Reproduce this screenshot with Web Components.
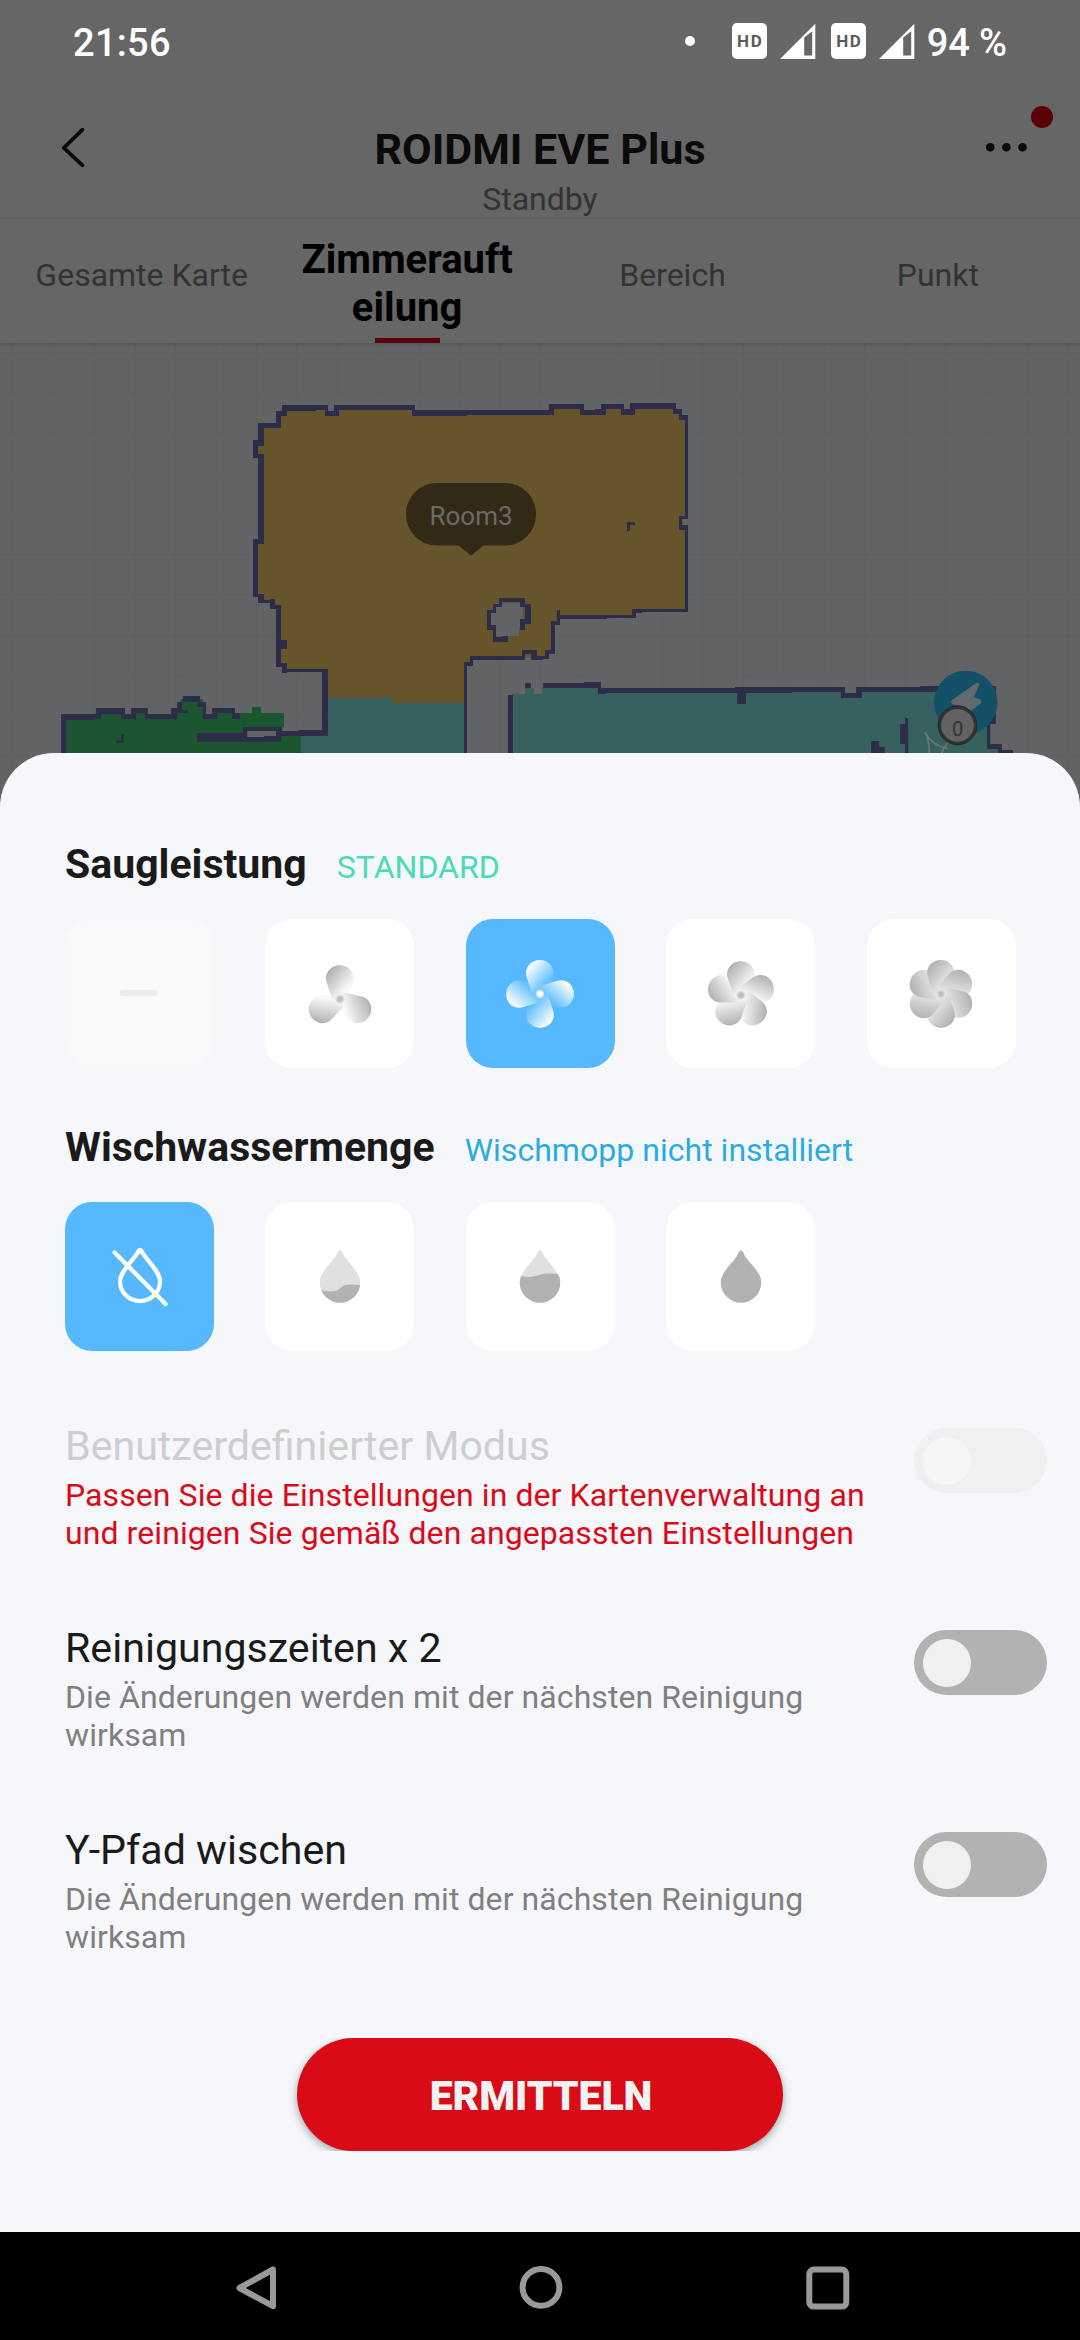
<!DOCTYPE html>
<html lang="de">
<head>
<meta charset="utf-8">
<meta name="viewport" content="width=1080">
<title>ROIDMI EVE Plus</title>
<style>
html,body{margin:0;padding:0}
body{font-family:Roboto,"Liberation Sans",sans-serif;background:#666;width:1080px;height:2340px;overflow:hidden}
</style>
</head>
<body>
<vacuum-app></vacuum-app>
<script>
const define = (name, html, extra) => {
  const tpl = document.createElement('template');
  tpl.innerHTML = html;
  customElements.define(name, class extends HTMLElement {
    connectedCallback() {
      if (this.shadowRoot) return;
      this.attachShadow({ mode: 'open' }).appendChild(tpl.content.cloneNode(true));
      if (extra) extra.call(this, this.shadowRoot);
    }
  });
};

/* ---------- system bars ---------- */
define('signal-icon', `<style>:host{display:block;width:36px;height:36px}svg{display:block}</style>
<svg width="36" height="36" viewBox="0 0 36 36"><path fill="#fff" fill-rule="evenodd" d="M35.3 .8V36H0ZM24.2 14.5V32.6H32.2V8.2Z"/></svg>`);

define('hd-badge', `<style>:host{display:flex;align-items:center;justify-content:center;width:35.6px;height:35.6px;border-radius:5px;background:#fff;color:#5c5c5c;font:700 17px/20px Roboto,sans-serif;letter-spacing:1.6px;text-indent:1.6px}</style><span>HD</span>`);

define('status-bar', `<style>
:host{display:flex;height:86px;box-sizing:border-box;padding:0 73px 0 73px;color:#fff;font:500 38px/86px Roboto,sans-serif;justify-content:space-between}
.r{display:flex;align-items:center}
.a{letter-spacing:.3px}
i{width:10px;height:10px;border-radius:5px;background:#fff;margin:0 37px 4px 0}
hd-badge{margin-bottom:4px}
signal-icon{margin:0 15px 4px 12.5px}
signal-icon.l{margin-right:12px}
.b{letter-spacing:-.1px}
</style><span class="a">21:56</span><div class="r"><i></i><hd-badge></hd-badge><signal-icon></signal-icon><hd-badge></hd-badge><signal-icon class="l"></signal-icon><span class="b">94 %</span></div>`);

define('nav-bar', `<style>:host{display:flex;height:108px;background:#000;justify-content:space-between;align-items:center;padding:4px 228px 0 233px;box-sizing:border-box}svg{display:block}</style>
<svg width="48" height="48" viewBox="0 0 48 48" fill="none" stroke="#999" stroke-width="6" stroke-linejoin="round"><path d="M40 5.5V42.2L6.5 24Z"/></svg>
<svg width="48" height="48" viewBox="0 0 48 48" fill="none" stroke="#999" stroke-width="6"><circle cx="22" cy="23.4" r="18.4"/></svg>
<svg width="48" height="48" viewBox="0 0 48 48" fill="none" stroke="#999" stroke-width="6"><rect x="5.3" y="5.6" width="37" height="37" rx="4.5"/></svg>`);

/* ---------- app header ---------- */
define('app-header', `<style>
:host{display:flex;position:relative;height:133px;box-sizing:border-box;border-bottom:2px solid #626161;justify-content:space-between;align-items:flex-start;padding:0 50px}
.t{padding-top:37.5px;text-align:center}
h1{margin:0;font:700 43px/50px Roboto,sans-serif;color:#0a0a0a}
p{margin:5px 0 0;font:400 32px/40px Roboto,sans-serif;color:#333}
svg{display:block;margin-top:37px}
.n{position:absolute;left:1031px;top:20px;width:22px;height:22px;border-radius:50%;background:#5a0008}
</style>
<svg width="48" height="48" viewBox="0 0 48 48" fill="none" stroke="#0a0a0a" stroke-width="3.8" stroke-linecap="round" stroke-linejoin="round"><path d="M32.5 6.7L13.8 24.8L32.5 42.3"/></svg>
<div class="t"><h1><slot name="title"></slot></h1><p><slot name="state"></slot></p></div>
<svg width="48" height="48" viewBox="0 0 48 48" fill="#0a0a0a"><circle cx="8.3" cy="24.3" r="4.3"/><circle cx="24.4" cy="24.3" r="4.3"/><circle cx="40.5" cy="24.3" r="4.3"/></svg>
<span class="n"></span>`);

define('mode-tab', `<style>
:host{display:flex;flex-direction:column;justify-content:space-between;align-items:center;width:265.4px;height:124px;padding-top:36px;box-sizing:border-box;font:400 32px/40px Roboto,sans-serif;color:#333;text-align:center}
:host([active]){font:700 40px/48px Roboto,sans-serif;color:#000;padding-top:17px}
u{display:none;width:65px;height:5px;background:#5a0008}
:host([active]) u{display:block}
span{white-space:pre-line}
</style><span><slot></slot></span><u></u>`);

define('tab-bar', `<style>:host{display:flex;position:relative;z-index:1;height:124px;padding:0 9px;background:#666;box-shadow:0 1px 3px rgba(0,0,0,.2)}</style><slot></slot>`);

/* ---------- floor map ---------- */
define('floor-map', `<style>:host{display:block;height:470px;background:#626365}svg{display:block}text{font-family:Roboto,sans-serif}</style>
<svg width="1080" height="470" viewBox="0 343 1080 470">
<defs><pattern id="g" width="40.55" height="40.4" patternUnits="userSpaceOnUse" x="12.8" y="352"><path d="M.6 0V40.4M0 .6H40.55" stroke="#5f6062" stroke-width="1.2"/></pattern></defs>
<rect y="343" width="1080" height="470" fill="url(#g)"/>
<!-- bedroom and corridor -->
<g transform="translate(230 380) scale(.33333)">
<path fill="#37615e" d="M213 1066H285V950H706V1200H213Z"/>
<path fill="#66542a" d="M146 100L160 84H290V98H320V84H550V98H965V80H1056V98H1120V80H1178V98H1208V80H1334V95H1350V112H1368V692H1212V706H986V728H969V816H952V832H880V834H725V852H706V969H484V953H290V872H164V855H146V680H127V662H92V645H76V485H92V228H76V188H92V136H146Z"/>
<path fill="#626365" d="M797 670H878V740H867V768H797V742H783V695H797ZM1357 417H1374V435H1357ZM294 75H312V93H294Z"/>
<path fill="#2d2d4a" d="M156 75H294V93H312V75H555V90H957V72H1062V90H1095V87H1113V72H1182V87H1200V69H1338V87H1356V105H1374V417H1356V435H1374V696H1236V699H1218V714H1131V717H990V735H975V822H957V837H939V840H903V822H885V840H729V858H711V1130H702V846H720V828H876V810H921V828H945V810H963V723H981V690H990V705H1206V687H1365V450H1347V408H1365V120H1347V102H1329V87H1215V105H1173V87H1128V105H1050V87H972V105H711V108H546V90H327V108H285V90H258V93H171V108H153V144H102V198H84V222H102V492H84V642H102V660H120V657H135V675H153V780H171V807H153V849H171V867H294V1068H207V1067H153V1053H207V1050H276V876H171V879H156V861H138V687H120V669H84V651H69V477H84V234H69V180H84V129H138V93H156Z"/>
<path fill="#2d2d4a" fill-rule="evenodd" d="M807 654H885V672H903V732H885V750H870V717H885V681H870V666H816V681H798V699H783V735H798V771H816V768H834V786H789V750H771V690H789V672H807ZM1191 426H1215V435H1200V453H1191Z"/>
<path fill="#706d6a" opacity=".3" d="M870 909H885V942H870ZM912 924H936V942H912Z"/>
</g>
<!-- left room -->
<g transform="translate(0 640) scale(.35714 .33333)">
<path fill="#1b5631" d="M178 230H275V212H346V230H372V212H408V230H490V212H505V178H568V212H572V230H600V212H655V219H706V201H731V219H795V262H787V288H843V350H178Z"/>
<path fill="#626365" d="M692 272H774V291H692Z"/>
<path fill="#2d2d4a" fill-rule="evenodd" d="M171 222H269V204H350V222H367V204H414V222H479V204H496V186H512V168H560V186H577V222H594V204H658V219H672V237H650V219H608V237H568V201H553V186H510V210H526V219H496V237H406V219H381V237H339V222H283V237H266V240H185V350H171ZM552 279H680V261H790V273H837V270H860V288H787V306H552ZM692 273V291H739V288H773V273ZM339 282H347V309H325V300H339Z"/>
</g>
<!-- right room -->
<g transform="translate(480 640) scale(.38265 .33333)">
<path fill="#37615e" d="M84 162H118V144H141V162H162V143H312V157H670V150H1335V322H1360V350H84Z"/>
<path fill="#626365" d="M954 135H983V159H954Z"/>
<path fill="#2d2d4a" d="M73 165H86V350H73ZM118 129H133V144H118ZM165 129H272V126H316V144H666V141H954V159H983V141H1150V138H1348V252H1333V312H1364V330H1393V350H1354V327H1325V156H998V174H943V156H815V159H695V192H672V159H329V162H308V144H165ZM1111 234H1119V350H1111V312H1098V252H1111ZM1022 303H1043V321H1058V350H1022Z"/>
</g>
<!-- cleaning trace, dock and marker -->
<g fill="none" stroke="#707572" stroke-width="1.7" stroke-linecap="round"><path d="M925.5 732.5Q931 745 947.5 748.5M925.5 733Q930 743 929 754M947.5 743Q943 748 941.5 754"/></g>
<circle cx="965.7" cy="702.5" r="31.8" fill="#145068"/>
<path fill="#626a6d" stroke="#626a6d" stroke-width="1.2" stroke-linejoin="round" d="M976.7 683.5Q978.6 683.2 978.4 685.2L972.9 697.4L979.8 699.8Q981.2 701.6 980 703.3L971.5 709.8L967.5 709.3L965.5 706L953.3 704Q950.8 702.3 952.3 700.6Z"/>
<circle cx="957.5" cy="725.3" r="18" fill="#626262" stroke="#333" stroke-width="3.2"/>
<circle cx="957.5" cy="725.3" r="19.3" fill="none" stroke="#262626" stroke-width=".9"/>
<text x="957.5" y="735.6" font-size="20" text-anchor="middle" fill="#353535">0</text>
<!-- room label -->
<rect x="406" y="483" width="130" height="62.5" rx="31" fill="#322916"/>
<path d="M458 545L471 555.7L484 545Z" fill="#322916"/>
<text x="471" y="525" font-size="26" text-anchor="middle" fill="#6c6a66">Room3</text>
</svg>`);

/* ---------- option icons ---------- */
let uid = 0;
define('fan-icon', `<style>:host{display:block;width:80px;height:80px}svg{display:block}</style><svg width="80" height="80" viewBox="-40 -40 80 80"></svg>`, function (root) {
  const n = +this.getAttribute('blades');
  const on = this.hasAttribute('light');
  const id = 'b' + uid++;
  const dark = on ? '#fff' : '#b2b2b2';
  const pale = on ? '#66c0ff' : n === 6 ? '#e9e9e9' : '#f8f8f8';
  const dy = { 3: 5.2, 4: 0, 5: 1.2, 6: 0 }[n];
  const blade = 'M-13.1 -16.6C-14.8 -22 -13.2 -26.8 -10.2 -29.8C-4.2 -35.3 4.6 -35.2 10 -29.8C14.6 -25 14.4 -19.2 12.6 -14.4C11 -10 8 -6.5 4.6 -2.8C2 0 -2 3 -5.3 1.6C-7.6 .4 -8.6 -2.6 -9.2 -4.6Z';
  let s = '';
  for (let i = 0; i < n; i++) s += `<path d="${blade}" fill="url(#${id})" transform="rotate(${i * 360 / n})"/>`;
  s += `<g clip-path="url(#${id}c)"><path d="${blade}" fill="url(#${id})"/></g>`;
  root.querySelector('svg').innerHTML = `<defs><linearGradient id="${id}" gradientUnits="userSpaceOnUse" x1="-11" y1="-28" x2="8" y2="-12"><stop stop-color="${dark}"/><stop offset="1" stop-color="${pale}"/></linearGradient><clipPath id="${id}c"><rect x="-40" y="-40" width="39" height="42"/></clipPath></defs>
  <g transform="translate(0 ${dy})">${s}<circle r="4.4" fill="${on ? '#c4e5ff' : '#dadada'}"/><circle r="2.7" fill="${on ? '#fff' : '#bdbdbd'}"/></g>`;
});

define('drop-icon', `<style>:host{display:block;width:80px;height:80px}svg{display:block}</style><svg width="80" height="80" viewBox="-40 -45.5 80 80"></svg>`, function (root) {
  const level = this.getAttribute('level');
  const d = 'M0 -32Q1.5 -32 2.5 -29.7C6 -20 20.3 -12 20.3 0A20.3 20.3 0 0 1 -20.3 0C-20.3 -12 -6 -20 -2.5 -29.7Q-1.5 -32 0 -32Z';
  const id = 'd' + uid++;
  const waves = {
    low: 'M-22 6.8C-12 9.8 -3.5 9.6 .5 5.5C5.5 .8 13 1.8 22 3V24H-22Z',
    mid: 'M-22 -8C-15 -5 -9 -4.8 -3 -7C4 -9.4 12 -9.6 22 -8V24H-22Z'
  };
  root.querySelector('svg').innerHTML = level === 'off'
    ? `<g fill="none" stroke="#fff" stroke-width="4.2" stroke-linecap="round" stroke-linejoin="round"><path d="M-1.4 -31.6Q0 -33.6 1.4 -31.6C5 -23.5 20 -12 20 -1A20 19.6 0 0 1 -20 -1C-20 -12 -5 -23.5 -1.4 -31.6Z"/><path d="M-25.4 -30L25.6 21.4"/></g>`
    : level === 'full' ? `<path d="${d}" fill="#b2b2b2"/>`
    : `<clipPath id="${id}"><path d="${d}"/></clipPath><path d="${d}" fill="#e0e0e0"/><path clip-path="url(#${id})" d="${waves[level]}" fill="#b2b2b2"/>`;
});

/* ---------- sheet parts ---------- */
define('option-card', `<style>
:host{display:flex;align-items:center;justify-content:center;width:149px;height:149px;border-radius:27px;background:#fff}
:host([selected]){background:#56b9ff}
:host([disabled]){background:#f8f9fb}
</style><slot></slot>`);

define('dash-icon', `<style>:host{display:block;width:38px;height:6px;border-radius:3px;margin:0 1px 1px 0;background:#ebecee}</style>`);

define('option-group', `<style>
:host{display:block}
header{display:flex;align-items:baseline;height:60px}
h2{margin:0;font:700 41px/60px Roboto,sans-serif;color:#1a1a1a}
p{margin:0 0 0 30px;font:400 32px/40px Roboto,sans-serif;letter-spacing:.03px;color:var(--state)}
.c{display:flex;gap:51.4px;margin-top:25px}
</style><header><h2><slot name="title"></slot></h2><p><slot name="state"></slot></p></header><div class="c"><slot></slot></div>`);

define('toggle-switch', `<style>
:host{display:flex;align-items:center;width:133px;height:65px;box-sizing:border-box;border-radius:32.5px;background:#b2b2b2;padding-left:8.5px}
i{width:48px;height:48px;border-radius:50%;background:#f0f0f0}
:host([disabled]){background:#eff0f2}
:host([disabled]) i{background:#f5f6f8}
</style><i></i>`);

define('setting-row', `<style>
:host{display:flex;justify-content:space-between;height:130px}
h3{margin:0;font:400 41.15px/48px Roboto,sans-serif;color:#1a1a1a}
p{margin:5.5px 0 0;font:400 32px/38px Roboto,sans-serif;letter-spacing:.08px;color:#808080;white-space:pre-line}
:host([disabled]) h3{color:#cdced0}
:host([disabled]) p{color:#dc0a18}
toggle-switch{margin-top:6px}
</style><div><h3><slot name="title"></slot></h3><p><slot></slot></p></div><toggle-switch></toggle-switch>`, function (root) {
  if (this.hasAttribute('disabled')) root.querySelector('toggle-switch').setAttribute('disabled', '');
});

define('primary-button', `<style>
:host{display:flex;justify-content:center;width:546px;height:113px;overflow:hidden}
button{all:unset;box-sizing:border-box;width:486px;height:113px;border-radius:56.5px;background:#d80b17;color:#f2f2f2;text-align:center;text-indent:3px;letter-spacing:-.1px;font:900 41px/116px Roboto,sans-serif;box-shadow:0 3px 8px rgba(0,0,0,.34)}
</style><button><slot></slot></button>`);

define('settings-sheet', `<style>
:host{display:flex;flex-direction:column;position:relative;z-index:2;margin-top:-60px;height:1479px;box-sizing:border-box;padding:81px 33px 0 65px;background:#f6f7fb;border-radius:54px 54px 0 0}
.g{display:flex;flex-direction:column;gap:49px}
.s{display:flex;flex-direction:column;gap:72px;margin-top:71px}
.f{display:flex;justify-content:center;margin:82px 0 0 -33px}
</style><div class="g"><slot name="options"></slot></div><div class="s"><slot></slot></div><div class="f"><slot name="action"></slot></div>`);

define('vacuum-app', `<style>
:host{display:flex;flex-direction:column;width:1080px;height:2340px;background:#666}
</style>
<status-bar></status-bar>
<app-header><span slot="title">ROIDMI EVE Plus</span><span slot="state">Standby</span></app-header>
<tab-bar><mode-tab>Gesamte Karte</mode-tab><mode-tab active>Zimmerauft<br>eilung</mode-tab><mode-tab>Bereich</mode-tab><mode-tab>Punkt</mode-tab></tab-bar>
<floor-map></floor-map>
<settings-sheet>
<option-group slot="options" style="--state:#4bdbb8"><span slot="title">Saugleistung</span><span slot="state">STANDARD</span>
<option-card disabled><dash-icon></dash-icon></option-card><option-card><fan-icon blades="3"></fan-icon></option-card><option-card selected><fan-icon blades="4" light></fan-icon></option-card><option-card><fan-icon blades="5"></fan-icon></option-card><option-card><fan-icon blades="6"></fan-icon></option-card></option-group>
<option-group slot="options" style="--state:#2aace2"><span slot="title">Wischwassermenge</span><span slot="state">Wischmopp nicht installiert</span>
<option-card selected><drop-icon level="off"></drop-icon></option-card><option-card><drop-icon level="low"></drop-icon></option-card><option-card><drop-icon level="mid"></drop-icon></option-card><option-card><drop-icon level="full"></drop-icon></option-card></option-group>
<setting-row disabled><span slot="title">Benutzerdefinierter Modus</span>Passen Sie die Einstellungen in der Kartenverwaltung an<br>und reinigen Sie gemäß den angepassten Einstellungen</setting-row>
<setting-row><span slot="title">Reinigungszeiten x 2</span>Die Änderungen werden mit der nächsten Reinigung<br>wirksam</setting-row>
<setting-row><span slot="title">Y-Pfad wischen</span>Die Änderungen werden mit der nächsten Reinigung<br>wirksam</setting-row>
<primary-button slot="action">ERMITTELN</primary-button>
</settings-sheet>
<nav-bar></nav-bar>`);
</script>
</body>
</html>
